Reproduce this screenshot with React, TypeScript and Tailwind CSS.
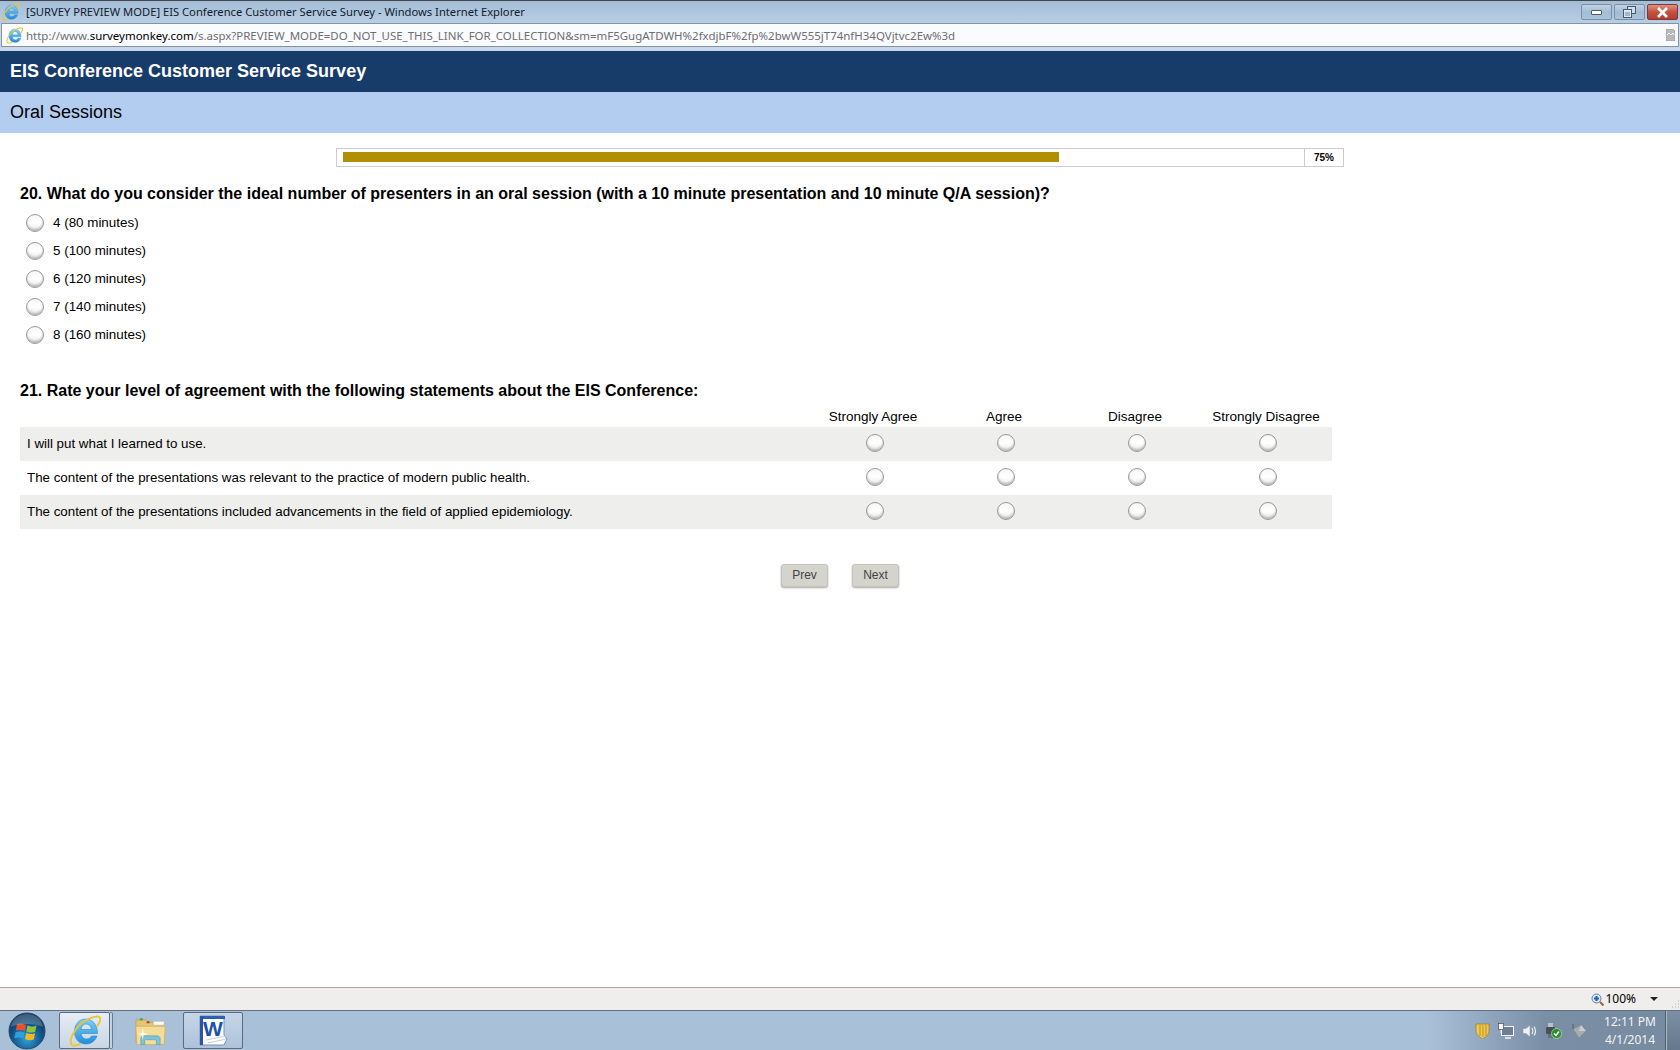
import React from "react";

const arial = "font-['Liberation_Sans',Arial,sans-serif]";
const segoe = "font-['Noto_Sans','Open_Sans',sans-serif]";

function IeIcon({ size, className = "" }: { size: number; className?: string }) {
  return (
    <svg width={size} height={size} viewBox="0 0 32 32" className={className} fill="none">
      <defs>
        <linearGradient id="iee" x1="0" y1="0" x2="0" y2="1">
          <stop offset="0%" stopColor="#7fd0f5" />
          <stop offset="100%" stopColor="#1d8fdc" />
        </linearGradient>
      </defs>
      <path
        d="M16.5 4C23.5 4 28.5 9.5 28.5 18.5H12C12.5 22 14.5 24 17.5 24C20 24 21.5 23 22.5 21H28C26.5 25.5 22.5 29 17 29C10 29 5.5 24 5.5 16.5C5.5 9.5 10 4 16.5 4ZM12 14.5H22.5C22 11 20 9 17 9C14.2 9 12.5 11 12 14.5Z"
        fill="url(#iee)"
        fillRule="evenodd"
        stroke="#1a78c2"
        strokeWidth="0.5"
      />
      <path d="M2.8 30C-1 25 7 11 16.5 5.5C23 1.8 30 0.2 31.2 3C32 5.5 29.5 9.5 27.5 12" stroke="#efc42c" strokeWidth="1.9" />
      <path d="M2.8 30C5 31.5 8.5 30.5 11.5 28.5" stroke="#efc42c" strokeWidth="1.9" />
    </svg>
  );
}

function Orb() {
  return (
    <svg width="38" height="38" viewBox="0 0 38 38" className="shrink-0">
      <defs>
        <radialGradient id="orb" cx="50%" cy="72%" r="70%">
          <stop offset="0%" stopColor="#2fa4dc" />
          <stop offset="55%" stopColor="#13598f" />
          <stop offset="100%" stopColor="#0b2f52" />
        </radialGradient>
      </defs>
      <circle cx="19" cy="19" r="18" fill="url(#orb)" stroke="#2c4a66" />
      <path d="M9 12.5C12 11 15 11.5 18 13L16.8 19C14 17.8 11 17.6 7.8 18.8Z" fill="#e8502a" />
      <path d="M19.5 13.5C22.5 15 25.5 15 28.5 13.5L27.2 19.8C24.5 21 21.5 20.8 18.4 19.5Z" fill="#8fc43a" />
      <path d="M7.5 20.2C10.5 19 13.5 19.2 16.5 20.5L15.3 26.5C12.5 25.2 9.5 25.2 6.3 26.3Z" fill="#2f9fe0" />
      <path d="M18.2 21C21.2 22.3 24 22.4 27 21.2L25.8 27.5C23 28.7 20 28.5 17 27Z" fill="#f5b81f" />
      <path d="M3 15C4 7 11 2 19 2C27 2 34 7 35 15C28 11 10 11 3 15Z" fill="#ffffff" opacity="0.22" />
    </svg>
  );
}

function Folder() {
  return (
    <svg width="32" height="30" viewBox="0 0 32 30">
      <path d="M1 3.5H12L14 6H27V27H1Z" fill="#e3c576" stroke="#b8a063" strokeWidth="0.8" />
      <rect x="5" y="2" width="3" height="2" fill="#2fae3f" />
      <rect x="12" y="5" width="3" height="2" fill="#c8392b" />
      <rect x="19" y="6" width="4" height="2" fill="#3e9fe0" />
      <path d="M19 5H30V9H19Z" fill="#fafafa" stroke="#c5b98f" strokeWidth="0.5" />
      <path d="M0.8 10H31.2L30 29H2Z" fill="#f6dd96" stroke="#c9ae6a" strokeWidth="0.8" />
      <path d="M6 29V23C6 20.5 8 20 10 20H22C24 20 26 20.5 26 23V29H22V25C22 24 21 24 20 24H12C11 24 10 24 10 25V29Z" fill="#7cc4dc" stroke="#4d98b8" strokeWidth="0.6" />
      <path d="M8 12L9 17L14 18L9 19L8 24L7 19L2 18L7 17Z" fill="#ffffff" opacity="0.85" />
    </svg>
  );
}

function WordIcon() {
  return (
    <svg width="32" height="32" viewBox="0 0 32 32">
      <path d="M3 1H27V20L30 24L27 30H3Z" fill="#ffffff" stroke="#7a93b8" />
      <path d="M3 1H28V4H3Z" fill="#2f5fb0" />
      <path d="M3 1H6V30H3Z" fill="#2a56a8" />
      <text x="16" y="21" textAnchor="middle" fontFamily="Liberation Sans" fontWeight="700" fontSize="21" fill="#1c52a8">W</text>
      <path d="M9 25L29 21M11 28L29 24" stroke="#c4cfdc" strokeWidth="1" />
    </svg>
  );
}

function WinButton({ kind }: { kind: "min" | "max" | "close" }) {
  const tone =
    kind === "close"
      ? "bg-linear-to-b from-[#e0917f] via-[#c4513f] to-[#b83c2c] border-[#7a3a3a]"
      : "bg-linear-to-b from-[#c0d2e4] via-[#a3bcd6] to-[#a9c4dd] border-[#7f8fa3]";
  return (
    <div className={`flex h-[16px] w-[31px] items-center justify-center rounded-[2px] border ${tone}`}>
      {kind === "min" && <div className="mt-[1px] h-[5px] w-[11px] rounded-[1px] border border-[#4c5a68] bg-white" />}
      {kind === "max" && (
        <svg width="13" height="12" viewBox="0 0 13 12" fill="none">
          <rect x="4.5" y="0.5" width="8" height="7" fill="#cfdeec" stroke="#4c5a68" />
          <rect x="0.5" y="3.5" width="8" height="8" fill="#dde8f2" stroke="#4c5a68" />
          <rect x="2" y="6" width="5" height="4" fill="#9fb6cc" />
        </svg>
      )}
      {kind === "close" && (
        <svg width="13" height="11" viewBox="0 0 13 11">
          <path d="M2 1L11 10M11 1L2 10" stroke="#ffffff" strokeWidth="2.8" />
        </svg>
      )}
    </div>
  );
}

function Radio() {
  return (
    <div className="h-[18px] w-[18px] shrink-0 rounded-full border border-[#999999] bg-linear-to-b from-[#f6f6f6] via-white to-[#e6e6e6] shadow-[inset_0_-2px_2px_rgba(0,0,0,0.2)]" />
  );
}

const options = ["4 (80 minutes)", "5 (100 minutes)", "6 (120 minutes)", "7 (140 minutes)", "8 (160 minutes)"];
const columns = ["Strongly Agree", "Agree", "Disagree", "Strongly Disagree"];
const statements = [
  "I will put what I learned to use.",
  "The content of the presentations was relevant to the practice of modern public health.",
  "The content of the presentations included advancements in the field of applied epidemiology.",
];
const gridCols = "grid w-[1312px] grid-cols-[789px_131px_131px_131px_131px]";

export default function App() {
  return (
    <div className={`flex h-[1050px] w-[1680px] flex-col overflow-hidden bg-white ${arial}`}>
      {/* Title bar */}
      <div className="flex h-[23px] shrink-0 items-center border-t border-[#40464d] bg-linear-to-b from-[#a4bdd6] to-[#b7cee4]">
        <IeIcon size={18} className="ml-[2px]" />
        <div className={`ml-[6px] text-[11.2px] leading-none whitespace-nowrap text-[#10202e] ${segoe}`}>
          [SURVEY PREVIEW MODE] EIS Conference Customer Service Survey - Windows Internet Explorer
        </div>
        <div className="ml-auto mr-[2px] flex gap-[2px]">
          <WinButton kind="min" />
          <WinButton kind="max" />
          <WinButton kind="close" />
        </div>
      </div>
      {/* Address bar */}
      <div className="flex h-[28px] shrink-0 items-start bg-[#c5d9ec] px-[1px]">
        <div className="flex h-[24px] w-full items-center border border-[#86929f] bg-[#fafbff] pl-[4px] pr-[3px]">
          <IeIcon size={17} />
          <div className={`ml-[3px] pt-[2px] text-[11.47px] leading-none whitespace-nowrap text-[#6e6e6e] ${segoe}`}>
            http://www.<span className="text-black">surveymonkey.com</span>/s.aspx?PREVIEW_MODE=DO_NOT_USE_THIS_LINK_FOR_COLLECTION&amp;sm=mF5GugATDWH%2fxdjbF%2fp%2bwW555jT74nfH34QVjtvc2Ew%3d
          </div>
          <svg width="9" height="12" viewBox="0 0 9 12" className="ml-auto">
            <path d="M0 0H7L9 2V12H0Z" fill="#b9b9b9" stroke="#8a8a8a" strokeWidth="0.5" />
            <path d="M1 6L3 4L5 6L7 4L8 6" stroke="#ffffff" fill="none" />
          </svg>
        </div>
      </div>
      {/* Survey heading */}
      <div className="flex h-[41px] shrink-0 items-center bg-[#183c69] pl-[10px] text-[18px] font-bold text-white">
        EIS Conference Customer Service Survey
      </div>
      <div className="flex h-[41px] shrink-0 items-center bg-[#b3cdf1] pl-[10px] text-[18px] text-black">Oral Sessions</div>

      {/* Content */}
      <div className="flex min-h-0 flex-1 flex-col px-[20px]">
        <div className="ml-[316px] mt-[15px] flex h-[19px] w-[1008px] shrink-0 border border-[#cccccc]">
          <div className="flex w-[968px] items-start border-r border-[#cccccc] pl-[6px] pt-[3px]">
            <div className="h-[10px] w-[716px] bg-[#b09000]" />
          </div>
          <div className="flex flex-1 items-center justify-center text-[10px] font-bold text-black">75%</div>
        </div>

        <div className="mt-[18px] h-[18px] text-[16px] leading-[18px] font-bold whitespace-nowrap text-black">
          20. What do you consider the ideal number of presenters in an oral session (with a 10 minute presentation and 10 minute Q/A session)?
        </div>
        <div className="mt-[6px] flex flex-col">
          {options.map((o) => (
            <div key={o} className="flex h-[28px] items-center pl-[6px]">
              <Radio />
              <span className="ml-[9px] pt-[1px] text-[13.4px] text-black">{o}</span>
            </div>
          ))}
        </div>

        <div className="mt-[33px] h-[18px] text-[16px] leading-[18px] font-bold whitespace-nowrap text-black">
          21. Rate your level of agreement with the following statements about the EIS Conference:
        </div>
        <div className={`${gridCols} mt-[7px] h-[20px] items-center`}>
          <div />
          {columns.map((c) => (
            <div key={c} className="pr-[3px] text-center text-[13.5px] whitespace-nowrap text-black">
              {c}
            </div>
          ))}
        </div>
        {statements.map((s, i) => (
          <div key={s} className={`${gridCols} h-[34px] items-center ${i % 2 === 0 ? "bg-[#eeeeec]" : "bg-white"}`}>
            <div className="pl-[7px] text-[13.33px] whitespace-nowrap text-black">{s}</div>
            {columns.map((c) => (
              <div key={c} className="flex justify-center pb-[2px]">
                <Radio />
              </div>
            ))}
          </div>
        ))}

        <div className="ml-[761px] mt-[35px] flex gap-[24px]">
          {["Prev", "Next"].map((b) => (
            <div
              key={b}
              className="flex h-[23px] w-[47px] items-center justify-center rounded-[3px] border border-[#c4c4bc] bg-[#d4d4cc] pb-[2px] text-[12px] text-[#444444] shadow-[0_1px_2px_rgba(0,0,0,0.35)]"
            >
              {b}
            </div>
          ))}
        </div>
      </div>

      {/* Status bar */}
      <div className="flex h-[23px] shrink-0 items-center border-t border-[#a6a6a6] bg-[#f0eeec]">
        <div className="ml-auto flex items-center text-[12px] leading-none text-black">
          <svg width="13" height="13" viewBox="0 0 13 13">
            <circle cx="5.5" cy="5.5" r="4.5" fill="#d8e6f5" stroke="#6d7f95" />
            <path d="M3 5.5H8M5.5 3V8" stroke="#1f5fc0" strokeWidth="2" />
            <path d="M9 9L12.5 12.5" stroke="#8a6a3a" strokeWidth="2" />
          </svg>
          <span className={`ml-[1px] ${segoe}`}>100%</span>
          <svg width="8" height="4" viewBox="0 0 8 4" className="ml-[14px]">
            <path d="M0 0H8L4 4Z" fill="#222222" />
          </svg>
          <svg width="9" height="9" viewBox="0 0 9 9" className="ml-[13px] mt-[10px]">
            <path d="M7 1H8M4 4H5M7 4H8M1 7H2M4 7H5M7 7H8" stroke="#b4b4b4" />
          </svg>
        </div>
      </div>

      {/* Task bar */}
      <div className="flex h-[40px] shrink-0 items-center border-t border-[#5f7186] bg-[linear-gradient(90deg,#a9c0d9_0%,#a9c0d9_85%,#7a8ea5_92%,#768aa0_100%)]">
        <div className="ml-[8px] flex h-full items-center">
          <Orb />
        </div>
        <div className="ml-[13px] flex h-full items-stretch py-[1px]">
          <div className="flex w-[51px] items-center justify-center rounded-[2px] border border-[#5c6b7c] bg-linear-to-b from-[#e6edf4] to-[#c9d6e3]">
            <IeIcon size={32} />
          </div>
          <div className="w-[3px] rounded-r-[2px] border border-l-0 border-[#6a7b8e] bg-[#c4d3e2]" />
        </div>
        <div className="ml-[22px] flex h-full w-[31px] items-center justify-center">
          <Folder />
        </div>
        <div className="ml-[17px] flex h-full items-stretch py-[1px]">
          <div className="flex w-[60px] items-center justify-center rounded-[2px] border border-[#5c6b7c] bg-linear-to-b from-[#c6d6e7] to-[#adc3da]">
            <WordIcon />
          </div>
        </div>

        <div className="ml-auto flex h-full items-center">
          <div className="flex items-center gap-[8px]">
            <svg width="15" height="16" viewBox="0 0 15 16">
              <path d="M1 1H14V8C14 12 10 14 7.5 16C5 14 1 12 1 8Z" fill="#f0c94e" stroke="#9a7a20" strokeWidth="0.7" />
              <path d="M5 2V13M8 2V14M11 2V13" stroke="#b8922c" strokeWidth="1" />
            </svg>
            <svg width="16" height="16" viewBox="0 0 16 16" fill="none">
              <rect x="3.5" y="3.5" width="12" height="9" fill="#6d7f92" stroke="#f4f6f8" />
              <path d="M7 15H13" stroke="#f4f6f8" strokeWidth="1.5" />
              <rect x="0.5" y="0.5" width="5" height="6" fill="#ffffff" stroke="#2a3440" strokeWidth="0.6" />
              <path d="M3 7V10" stroke="#f4f6f8" />
            </svg>
            <svg width="16" height="16" viewBox="0 0 16 16" fill="none">
              <path d="M1 5.5H4L8 2V14L4 10.5H1Z" fill="#f0f3f6" stroke="#8b98a6" strokeWidth="0.6" />
              <path d="M10 5C11 6.5 11 9.5 10 11M12 3.5C14 6 14 10 12 12.5" stroke="#eef2f6" strokeWidth="1.2" />
            </svg>
            <svg width="17" height="17" viewBox="0 0 17 17" className="ml-[-1px]">
              <rect x="3" y="1" width="5" height="4" fill="#b9c0c7" />
              <rect x="1" y="5" width="9" height="7" rx="1" fill="#4a5058" />
              <rect x="3" y="12" width="5" height="4" fill="#6a7078" />
              <circle cx="11.5" cy="11.5" r="5" fill="#2c8f2e" stroke="#e4f0e4" strokeWidth="0.5" />
              <path d="M9 11.5L11 13.5L14 9.5" stroke="#ffffff" strokeWidth="1.4" fill="none" />
            </svg>
            <svg width="16" height="16" viewBox="0 0 16 16" className="ml-[2px]">
              <path d="M1 6L9 2L14 8L7 15Z" fill="#a8acb0" stroke="#7a7e82" strokeWidth="0.5" />
              <path d="M9 2L14 8L7 8Z" fill="#c9cccf" />
              <path d="M1 6L1 1" stroke="#5a5e62" />
            </svg>
          </div>
          <div className={`ml-[17px] mr-[10px] flex w-[50px] flex-col items-center text-[12px] leading-[18px] whitespace-nowrap text-[#f2f5f8] ${segoe}`}>
            <span>12:11 PM</span>
            <span>4/1/2014</span>
          </div>
          <div className="h-full w-[15px] border-l border-[#4f5f70] bg-linear-to-b from-[#7c8fa5] to-[#66788d] shadow-[inset_1px_0_0_#a9b8c8]" />
        </div>
      </div>
    </div>
  );
}
